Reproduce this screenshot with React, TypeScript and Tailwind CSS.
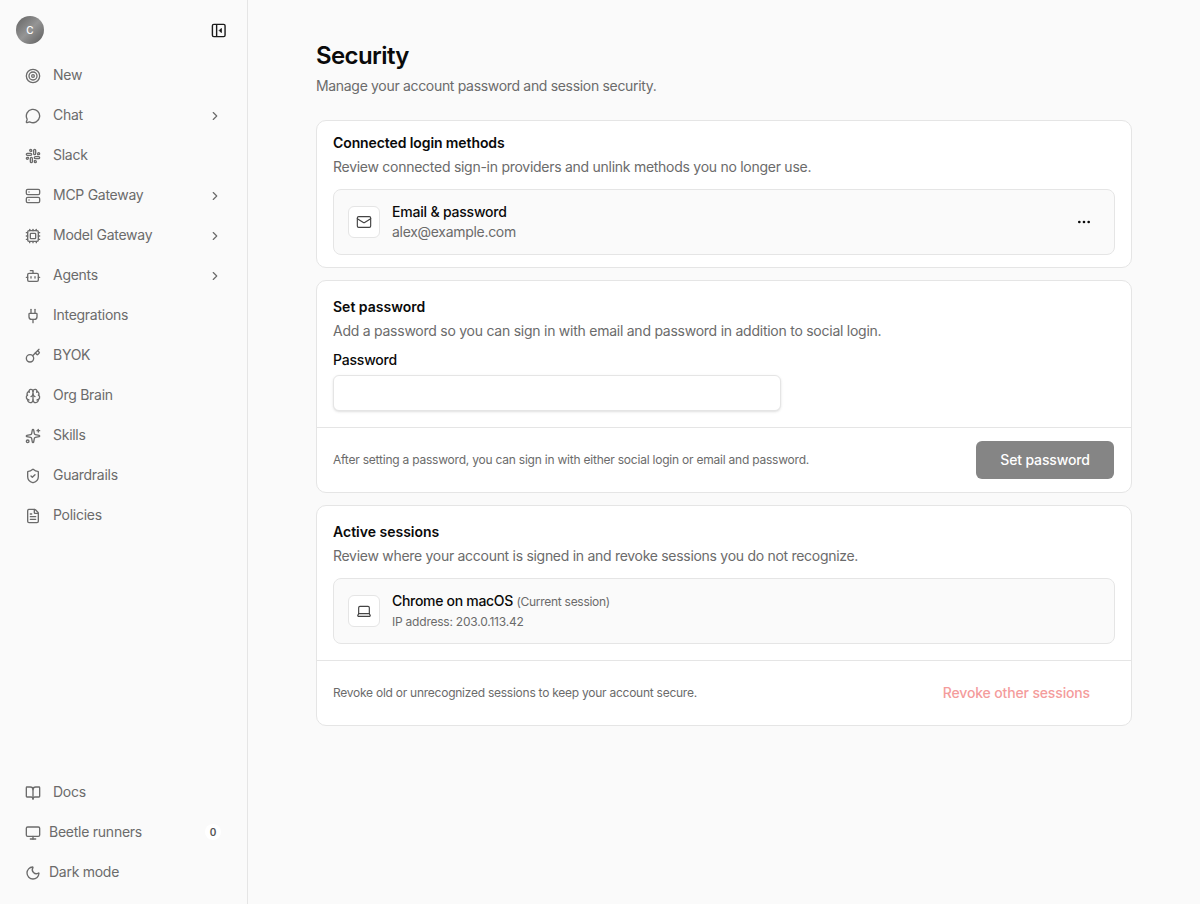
import React from "react";
import { Target, MessageCircle, Slack, Server, Cpu, Bot, Plug, Key, Brain, ShieldCheck, FileText, BookOpen, Monitor, Moon, ChevronRight, Mail, Laptop, Ellipsis, Sparkles } from "lucide-react";

const PanelIcon = () => (
  <svg viewBox="0 0 16 16" className="w-[15px] h-[15px]" fill="none" stroke="#1a1a1a" strokeWidth="1.500">
    <rect x="1.500" y="1.500" width="13.500" height="13" rx="1.500" />
    <path d="M6 1.500v13" />
    <path d="M11 5.800 8.800 8l2.200 2.200z" fill="#1a1a1a" strokeWidth="1" />
  </svg>
);

const nav = [
  { label: "New", Icon: Target },
  { label: "Chat", Icon: MessageCircle, chev: true },
  { label: "Slack", Icon: Slack },
  { label: "MCP Gateway", Icon: Server, chev: true },
  { label: "Model Gateway", Icon: Cpu, chev: true },
  { label: "Agents", Icon: Bot, chev: true },
  { label: "Integrations", Icon: Plug },
  { label: "BYOK", Icon: Key },
  { label: "Org Brain", Icon: Brain },
  { label: "Skills", Icon: Sparkles },
  { label: "Guardrails", Icon: ShieldCheck },
  { label: "Policies", Icon: FileText },
];

function NavRow({ label, Icon, chev }: { label: string; Icon: any; chev?: boolean }) {
  return (
    <div className="h-10 flex items-center pl-[25px] pr-[25px] text-[#6b6b6b]">
      <Icon className="w-4 h-4 shrink-0" />
      <span className="ml-3 mb-[2px] text-sm tracking-[-0.27px]">{label}</span>
      {chev && <ChevronRight className="w-[14px] h-[14px] ml-auto" />}
    </div>
  );
}

function Card({ children }: { children: React.ReactNode }) {
  return <section className="bg-white border border-[#e5e5e5] rounded-[10px] overflow-hidden">{children}</section>;
}

function IconBox({ children }: { children: React.ReactNode }) {
  return (
    <div className="w-8 h-8 shrink-0 bg-white border border-[#e5e5e5] rounded-md flex items-center justify-center text-[#444444]">
      {children}
    </div>
  );
}

export default function App() {
  return (
    <div className="flex h-[904px] bg-[#fafafa] text-[#0a0a0a] overflow-hidden" style={{ fontFamily: "Inter, sans-serif" }}>
      <aside className="w-[248px] shrink-0 border-r border-[#e5e5e5] flex flex-col pb-[11px]">
        <div className="flex items-center justify-between pl-4 pr-[21px] pt-4 pb-3">
          <div className="w-7 h-7 rounded-full bg-gradient-to-br from-[#626262] via-[#959595] to-[#5c5c5c] flex items-center justify-center text-white text-[10px] font-medium">
            C
          </div>
          <PanelIcon />
        </div>
        <nav className="flex flex-col">
          {nav.map((n) => (
            <NavRow key={n.label} {...n} />
          ))}
        </nav>
        <div className="mt-auto flex flex-col">
          <NavRow label="Docs" Icon={BookOpen} />
          <div className="h-10 flex items-center pl-[25px] pr-[26px] text-[#6b6b6b]">
            <Monitor className="w-4 h-4" />
            <span className="ml-2 mb-[2px] text-sm tracking-[-0.25px]">Beetle runners</span>
            <span className="ml-auto mb-[2px] w-4 h-4 rounded-full bg-white flex items-center justify-center text-[10px] font-semibold text-[#555555]">0</span>
          </div>
          <div className="h-10 flex items-center pl-[25px] pr-[26px] text-[#6b6b6b]">
            <Moon className="w-4 h-4" />
            <span className="ml-2 mb-[2px] text-sm tracking-[-0.27px]">Dark mode</span>
          </div>
        </div>
      </aside>

      <main className="flex-1 pl-[68px] pr-[68px] pt-[40px]">
        <h1 className="text-2xl leading-8 font-semibold tracking-[-0.6px]">Security</h1>
        <p className="mt-1 text-sm leading-5 tracking-[-0.32px] text-[#6b6b6b]">Manage your account password and session security.</p>

        <div className="mt-6 flex flex-col gap-3">
          <Card>
            <div className="p-3 px-4">
              <h2 className="text-sm leading-5 font-semibold tracking-[-0.1px]">Connected login methods</h2>
              <p className="mt-1 text-sm leading-5 tracking-[-0.27px] text-[#6b6b6b]">Review connected sign-in providers and unlink methods you no longer use.</p>
              <div className="mt-3 h-[66px] bg-[#fafafa] border border-[#e5e5e5] rounded-lg flex items-center px-[14px]">
                <IconBox><Mail className="w-4 h-4" strokeWidth={1.75} /></IconBox>
                <div className="ml-3">
                  <div className="text-sm leading-5 font-medium tracking-[-0.2px]">Email &amp; password</div>
                  <div className="text-sm leading-5 tracking-[-0.3px] text-[#6b6b6b]">alex@example.com</div>
                </div>
                <Ellipsis className="w-4 h-4 ml-auto mr-[8px] text-[#0a0a0a]" />
              </div>
            </div>
          </Card>

          <Card>
            <div className="p-4">
              <h2 className="text-sm leading-5 font-semibold">Set password</h2>
              <p className="mt-1 text-sm leading-5 tracking-[-0.25px] text-[#6b6b6b]">Add a password so you can sign in with email and password in addition to social login.</p>
              <label className="block mt-[9px] text-sm leading-5 font-medium tracking-[-0.2px]">Password</label>
              <input type="password" className="block mt-[5px] w-[448px] h-9 bg-white border border-[#e5e5e5] rounded-md shadow-sm" />
            </div>
            <div className="h-[65px] border-t border-[#e5e5e5] flex items-center justify-between pl-4 pr-[17px]">
              <p className="text-xs tracking-[-0.22px] text-[#6b6b6b]">After setting a password, you can sign in with either social login or email and password.</p>
              <button className="w-[138px] h-[38px] rounded-md bg-[#858585] text-white text-sm font-medium tracking-[-0.15px]">Set password</button>
            </div>
          </Card>

          <Card>
            <div className="p-4">
              <h2 className="text-sm leading-5 font-semibold">Active sessions</h2>
              <p className="mt-1 text-sm leading-5 tracking-[-0.29px] text-[#6b6b6b]">Review where your account is signed in and revoke sessions you do not recognize.</p>
              <div className="mt-3 h-[66px] bg-[#fafafa] border border-[#e5e5e5] rounded-lg flex items-center px-[14px]">
                <IconBox><Laptop className="w-4 h-4" strokeWidth={1.75} /></IconBox>
                <div className="ml-3 pb-[2px]">
                  <div className="text-sm leading-5 font-medium tracking-[-0.3px]">
                    Chrome on macOS <span className="text-xs font-normal tracking-[-0.28px] text-[#6b6b6b]">(Current session)</span>
                  </div>
                  <div className="mt-[3px] text-xs leading-4 tracking-[-0.22px] text-[#6b6b6b]">IP address: 203.0.113.42</div>
                </div>
              </div>
            </div>
            <div className="h-[65px] border-t border-[#e5e5e5] flex items-center justify-between pl-4 pr-[41px]">
              <p className="text-xs tracking-[-0.25px] text-[#6b6b6b]">Revoke old or unrecognized sessions to keep your account secure.</p>
              <button className="text-sm font-medium tracking-[-0.15px] text-[#f49c9c]">Revoke other sessions</button>
            </div>
          </Card>
        </div>
      </main>
    </div>
  );
}
